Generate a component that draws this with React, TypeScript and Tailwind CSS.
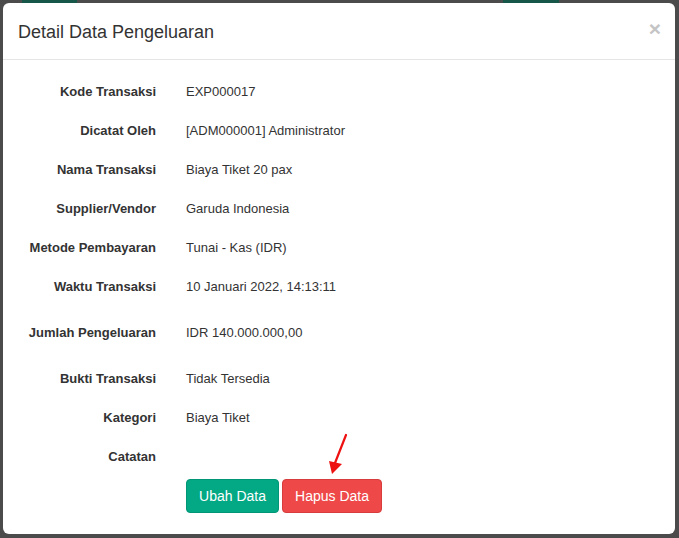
const rows: { label: string; value: string; tall?: boolean }[] = [
  { label: 'Kode Transaksi', value: 'EXP000017' },
  { label: 'Dicatat Oleh', value: '[ADM000001] Administrator' },
  { label: 'Nama Transaksi', value: 'Biaya Tiket 20 pax' },
  { label: 'Supplier/Vendor', value: 'Garuda Indonesia' },
  { label: 'Metode Pembayaran', value: 'Tunai - Kas (IDR)' },
  { label: 'Waktu Transaksi', value: '10 Januari 2022, 14:13:11' },
  { label: 'Jumlah Pengeluaran', value: 'IDR 140.000.000,00', tall: true },
  { label: 'Bukti Transaksi', value: 'Tidak Tersedia' },
  { label: 'Kategori', value: 'Biaya Tiket' },
  { label: 'Catatan', value: '' },
];

export default function App() {
  return (
    <div
      className="relative w-[679px] h-[538px] bg-[#4b4b4b] overflow-hidden"
      style={{ fontFamily: '"Liberation Sans", Arial, sans-serif' }}
    >
      {/* page behind the overlay */}
      <div className="absolute top-0 left-[22px] w-[55px] h-[4px] bg-[#16574a]" />
      <div className="absolute top-0 left-[503px] w-[56px] h-[4px] bg-[#16574a]" />

      <div className="absolute left-[3px] top-[3px] w-[672px] h-[531px] bg-white rounded-[6px] flex flex-col">
        <div className="h-[57px] flex items-center justify-between pl-[15px] pr-[14px] border-b border-[#e5e5e5]">
          <h4 className="text-[18px] text-[#333] leading-none pt-[1px]">Detail Data Pengeluaran</h4>
          <span className="text-[21px] font-bold leading-none text-[#c4c4c4] -mt-[5px]">×</span>
        </div>

        <div className="pt-[12px]">
          {rows.map((r) => (
            <div key={r.label} className={`flex items-center ${r.tall ? 'h-[53px]' : 'h-[39px]'}`}>
              <div className="w-[153px] text-right text-[13px] font-bold text-[#333]">{r.label}</div>
              <div className="ml-[30px] text-[13px] text-[#333]">{r.value}</div>
            </div>
          ))}
          <div className="relative flex gap-[3px] ml-[183px] mt-[3px]">
            <button className="h-[34px] w-[93px] rounded-[4px] bg-[#03a884] border border-[#019676] text-white text-[14px]">
              Ubah Data
            </button>
            <button className="h-[34px] w-[100px] rounded-[4px] bg-[#ee4848] border border-[#d83c3c] text-white text-[14px]">
              Hapus Data
            </button>
            <svg className="absolute left-[140px] -top-[46px]" width="24" height="44" viewBox="0 0 24 44">
              <line x1="20" y1="2" x2="9" y2="30" stroke="#ee1111" strokeWidth="2.2" strokeLinecap="round" />
              <polygon points="3,28 16,31 6,41" fill="#ee1111" />
            </svg>
          </div>
        </div>
      </div>
    </div>
  );
}
